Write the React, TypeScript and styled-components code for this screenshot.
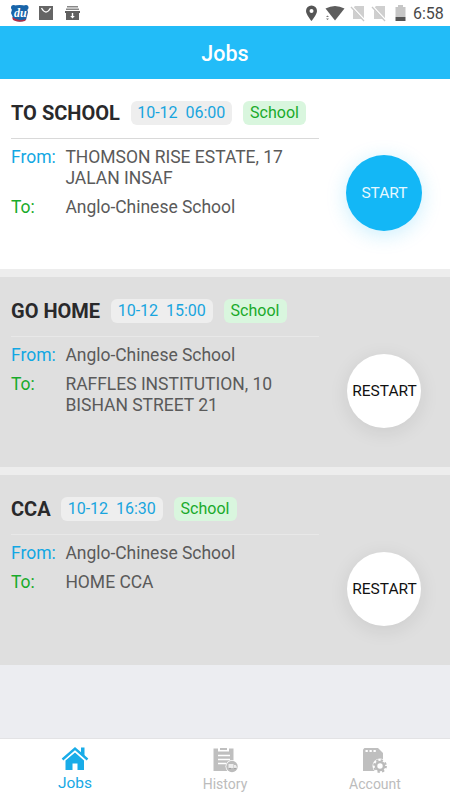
import React from 'react';
import styled, { createGlobalStyle } from 'styled-components';

const GlobalStyle = createGlobalStyle`
  * { box-sizing: border-box; }
  body { margin: 0; font-family: Roboto, "Liberation Sans", sans-serif; background: #ecedf1; }
  button { font-family: inherit; border: 0; padding: 0; }
`;

const Screen = styled.div`
  width: 450px;
  height: 800px;
  display: flex;
  flex-direction: column;
  overflow: hidden;
  background: #ecedf1;
`;

const StatusBar = styled.div`
  height: 26px;
  flex: none;
  display: flex;
  justify-content: space-between;
  background: #fff;
`;

const StatusText = styled.span`
  font-size: 16px;
  line-height: 28px;
  color: #484848;
  width: 37px;
  white-space: nowrap;
`;

const Header = styled.header`
  height: 53px;
  flex: none;
  background: #22bcf8;
  color: #fff;
  font-size: 21.5px;
  font-weight: 500;
  line-height: 56px;
  text-align: center;
`;

const JobList = styled.main`
  flex: 1;
  display: flex;
  flex-direction: column;
`;

const Card = styled.section<{ $done: boolean }>`
  height: 190px;
  flex: none;
  display: flex;
  padding-left: 11px;
  background: ${(p) => (p.$done ? '#dfdfdf' : '#fff')};
  & + & { margin-top: 8px; box-shadow: 0 -8px 0 #ededed; }
`;

const Details = styled.div`
  width: 308px;
  padding-top: 22px;
`;

const TitleRow = styled.div<{ $done: boolean }>`
  height: 38px;
  display: flex;
  align-items: flex-start;
  border-bottom: 1px solid ${(p) => (p.$done ? '#e8e8e8' : '#d9d9d9')};
`;

const Title = styled.h2<{ $width: number }>`
  margin: 0 11px 0 0;
  width: ${(p) => p.$width}px;
  font-size: 20px;
  font-weight: 700;
  line-height: 25px;
  color: #29292b;
  white-space: nowrap;
`;

const Badge = styled.span<{ $kind: 'time' | 'tag' }>`
  height: 24px;
  width: ${(p) => (p.$kind === 'time' ? 101.5 : 63)}px;
  margin-right: 11px;
  border-radius: 6px;
  font-size: 16px;
  line-height: 23px;
  text-align: center;
  white-space: pre;
  color: ${(p) => (p.$kind === 'time' ? '#18a5de' : '#19aa2b')};
  background: ${(p) => (p.$kind === 'time' ? '#eee' : '#d9f6de')};
`;

const Route = styled.dl`
  margin: 8px 0 0;
  display: grid;
  grid-template-columns: 54.4px 1fr;
  row-gap: 8.5px;
  font-size: 17.5px;
  line-height: 20.5px;
`;

const RouteLabel = styled.dt<{ $to?: boolean }>`
  color: ${(p) => (p.$to ? '#18ab2b' : '#12a7e3')};
`;

const Place = styled.dd`
  margin: 0;
  color: #5a5a5a;
  white-space: pre;
  letter-spacing: -0.02px;
`;

const Action = styled.div`
  flex: 1;
  display: flex;
  justify-content: center;
  padding-top: 75.5px;
  padding-right: 1px;
`;

const RoundButton = styled.button<{ $done: boolean }>`
  width: ${(p) => (p.$done ? 74.5 : 76.5)}px;
  height: ${(p) => (p.$done ? 74.5 : 76.5)}px;
  margin-top: ${(p) => (p.$done ? 1 : 0)}px;
  padding: 1px 0 0 1px;
  border-radius: 50%;
  font-size: 15.5px;
  white-space: nowrap;
  color: ${(p) => (p.$done ? '#111' : '#e6f8ff')};
  background: ${(p) => (p.$done ? '#fff' : '#13b7f6')};
  box-shadow: 0 4px 20px ${(p) => (p.$done ? 'rgba(0,0,0,.09)' : 'rgba(19,183,246,.22)')};
`;

const TabBar = styled.nav`
  height: 62px;
  flex: none;
  display: grid;
  grid-template-columns: repeat(3, 1fr);
  background: #fff;
  border-top: 1px solid #e3e3e5;
`;

const Tab = styled.div<{ $active?: boolean }>`
  display: flex;
  flex-direction: column;
  align-items: center;
  padding-top: 6px;
  font-size: ${(p) => (p.$active ? 15.5 : 14)}px;
  line-height: 18px;
  color: ${(p) => (p.$active ? '#17a9e5' : '#bcbcbc')};
  svg { margin-bottom: ${(p) => (p.$active ? 1 : 2)}px; }
`;

const StatusLeft = () => (
  <svg width="90" height="26">
    <circle cx="13.5" cy="7.5" r="2.5" fill="#1864a9" />
    <circle cx="26" cy="7.5" r="2.5" fill="#1864a9" />
    <path d="M13 6q7-2 13 0l2 6-2 8q-6 3-12 0l-3-7z" fill="#1864a9" />
    <path d="M12 17q7 5 14 2l-1 2q-7 2-12-1z" fill="#b62e43" />
    <text x="14" y="16.5" fontFamily="Liberation Serif" fontSize="12" fontWeight="700" fontStyle="italic" fill="#fff">du</text>
    <path d="M39 6h14v14H39z" fill="#656565" />
    <path d="M41.500 8q4.500 8 9 0" fill="none" stroke="#fff" strokeWidth="1.3" />
    <path d="M67 6.7h11M66 9.3h13" stroke="#888" strokeWidth="1.5" />
    <path d="M65 11h15v2H65zM66 13h13v7H66z" fill="#606060" />
    <path d="M71.800 13h1.400v3h1.600l-2.300 2.500-2.300-2.500h1.600z" fill="#fff" />
  </svg>
);

const StatusIcons = () => (
  <svg width="110" height="26">
    <path d="M8.5 21S3 14.5 3 11a5.5 5.5 0 0 1 11 0c0 3.500-5.500 10-5.500 10z" fill="#555" />
    <circle cx="8.500" cy="11" r="2" fill="#fff" />
    <path d="M22.500 8.500q9.500-5 19 0L32 20.500z" fill="#5d5d5d" />
    <path d="m24.500 15.500 1.500 1.500h-3zM24.500 20l-1.500-1.500h3z" fill="#777" />
    {[49, 70].map((x) => (
      <g key={x}>
        <path d={`M${x + 3} 6h9v13H${x + 1}V8z`} fill="#cfcfcf" />
        <path d={`M${x - 1} 6l14 15`} stroke="#fff" strokeWidth="2.500" />
        <path d={`M${x - 1} 7l13 14`} stroke="#c8c8c8" strokeWidth="1.300" />
      </g>
    ))}
    <path d="M92.500 7H95V5h5v2h2.500v10h-10z" fill="#c6c6c6" />
    <path d="M92.500 17h10v4h-10z" fill="#555" />
  </svg>
);

const StatusGroup = styled.div`
  display: flex;
  svg { display: block; }
`;

const HomeIcon = () => (
  <svg width="28" height="28">
    <path d="M4.500 15.500 14 7.500l9 8V25h-6.500v-6.500h-5V25h-7z" fill="#19ace8" />
    <path d="m1.500 14.500 12.500-11 12.500 11" fill="none" stroke="#19ace8" strokeWidth="2.400" />
    <path d="M20 2.500h3.500v9L20 8.500z" fill="#19ace8" />
    <path d="m4 15 10-8.500 10 8.500" fill="none" stroke="#fff" strokeWidth=".6" />
  </svg>
);

const HistoryIcon = () => (
  <svg width="28" height="28">
    <path d="M2.500 3.500H7v3h11v-3h4.500V26h-20zM9 3h7v2H9z" fill="#bfbfbf" />
    <path d="M7 10.500h12M7 14.500h12M7 18.500h8" stroke="#fff" strokeWidth="1.500" />
    <circle cx="21" cy="21.500" r="6.500" fill="#fff" />
    <circle cx="21" cy="21.500" r="5.700" fill="#bcbcbc" />
    <path d="M17.500 19h5v4h-5zM23 20h1.700l1 1.500V23H23z" fill="#eee" />
    <circle cx="19" cy="23.500" r=".8" fill="#999" />
    <circle cx="24" cy="23.500" r=".8" fill="#999" />
  </svg>
);

const AccountIcon = () => (
  <svg width="28" height="28">
    <path d="M3.500 3H17l5 5v18h-20V4.500z" fill="#bfbfbf" />
    <path d="M4.500 6h2.300M8.500 6h2.300M12.500 6h2.300" stroke="#fff" strokeWidth="1.800" />
    <circle cx="19" cy="21" r="7.500" fill="#fff" />
    <circle cx="19" cy="21" r="4" fill="none" stroke="#bbb" strokeWidth="2.600" />
    <circle cx="19" cy="21" r="5.900" fill="none" stroke="#bbb" strokeWidth="2" strokeDasharray="2.320 2.313" />
  </svg>
);

const jobs = [
  { title: 'TO SCHOOL', width: 108.5, time: '10-12  06:00', from: 'THOMSON RISE ESTATE, 17\nJALAN INSAF', to: 'Anglo-Chinese School', action: 'START', done: false },
  { title: 'GO HOME', width: 89, time: '10-12  15:00', from: 'Anglo-Chinese School', to: 'RAFFLES INSTITUTION, 10\nBISHAN STREET 21', action: 'RESTART', done: true },
  { title: 'CCA', width: 39, time: '10-12  16:30', from: 'Anglo-Chinese School', to: 'HOME CCA', action: 'RESTART', done: true },
];

export default function App() {
  return (
    <Screen>
      <GlobalStyle />
      <StatusBar>
        <StatusGroup><StatusLeft /></StatusGroup>
        <StatusGroup><StatusIcons /><StatusText>6:58</StatusText></StatusGroup>
      </StatusBar>
      <Header>Jobs</Header>
      <JobList>
        {jobs.map((job) => (
          <Card key={job.title} $done={job.done}>
            <Details>
              <TitleRow $done={job.done}>
                <Title $width={job.width}>{job.title}</Title>
                <Badge $kind="time">{job.time}</Badge>
                <Badge $kind="tag">School</Badge>
              </TitleRow>
              <Route>
                <RouteLabel>From:</RouteLabel>
                <Place>{job.from}</Place>
                <RouteLabel $to>To:</RouteLabel>
                <Place>{job.to}</Place>
              </Route>
            </Details>
            <Action>
              <RoundButton $done={job.done}>{job.action}</RoundButton>
            </Action>
          </Card>
        ))}
      </JobList>
      <TabBar>
        <Tab $active><HomeIcon />Jobs</Tab>
        <Tab><HistoryIcon />History</Tab>
        <Tab><AccountIcon />Account</Tab>
      </TabBar>
    </Screen>
  );
}
